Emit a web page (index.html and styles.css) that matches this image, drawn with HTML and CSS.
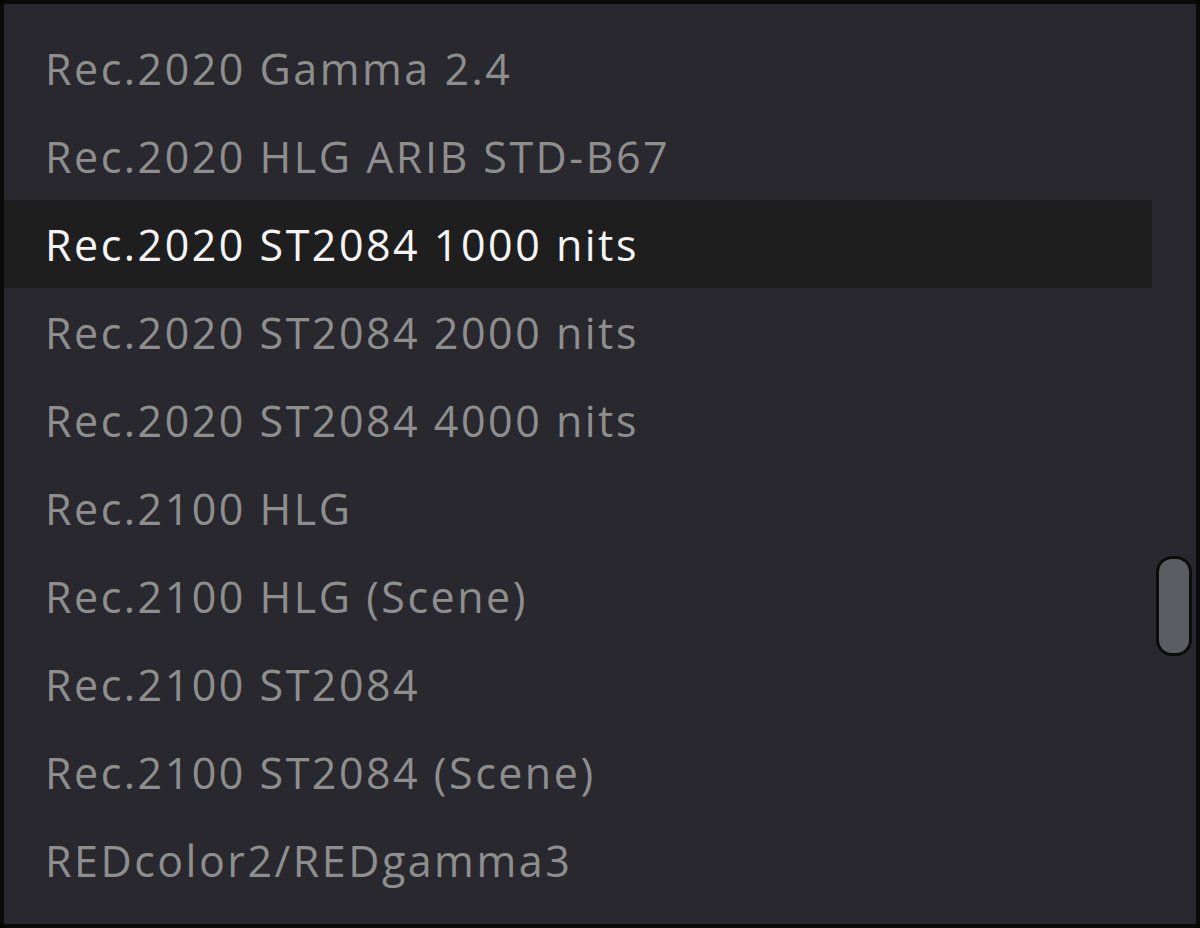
FILE: index.html
```html
<!DOCTYPE html>
<html>
<head>
<meta charset="utf-8">
<link rel="stylesheet" href="styles.css">
</head>
<body>
<div class="panel">
  <ul class="list">
    <li class="item">Rec.2020 Gamma 2.4</li>
    <li class="item">Rec.2020 HLG ARIB STD-B67</li>
    <li class="item selected">Rec.2020 ST2084 1000 nits</li>
    <li class="item">Rec.2020 ST2084 2000 nits</li>
    <li class="item">Rec.2020 ST2084 4000 nits</li>
    <li class="item">Rec.2100 HLG</li>
    <li class="item">Rec.2100 HLG (Scene)</li>
    <li class="item">Rec.2100 ST2084</li>
    <li class="item">Rec.2100 ST2084 (Scene)</li>
    <li class="item">REDcolor2/REDgamma3</li>
  </ul>
  <div class="track"><div class="thumb"></div></div>
</div>
</body>
</html>
```
FILE: styles.css
```css
html, body {
  margin: 0;
  padding: 0;
  background: #000;
}
.panel {
  box-sizing: border-box;
  width: 1200px;
  height: 928px;
  border: 4px solid #0a0a0b;
  border-radius: 6px;
  background: #28282e;
  display: flex;
}
.list {
  list-style: none;
  margin: 0;
  padding: 20px 0;
  width: 1148px;
}
.item {
  height: 88px;
  display: flex;
  align-items: center;
  padding-left: 41px;
  font-family: "Open Sans", sans-serif;
  font-size: 43px;
  letter-spacing: 2.5px;
  color: #8e8e8e;
  white-space: nowrap;
}
.item.selected {
  background: #1e1e1f;
  color: #f4f4f4;
}
.track {
  width: 44px;
  position: relative;
}
.thumb {
  position: absolute;
  left: 4px;
  top: 552px;
  width: 36px;
  height: 100px;
  box-sizing: border-box;
  border: 3px solid #0c0c0d;
  border-radius: 16px;
  background: #5b5d63;
}
```
